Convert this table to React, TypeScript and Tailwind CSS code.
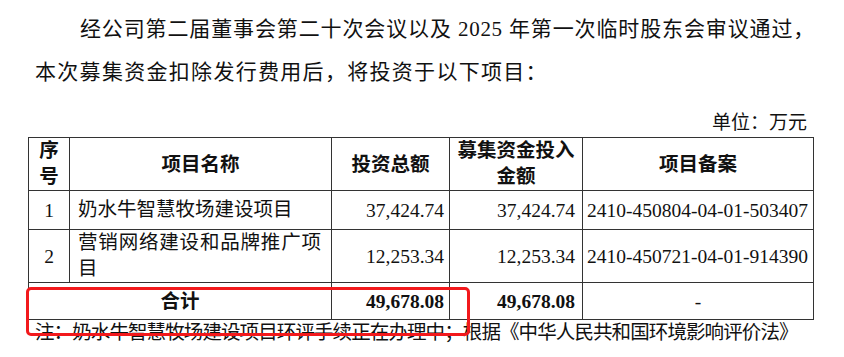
import React from 'react';

const FONT = '[font-family:"Liberation_Serif","Noto_Sans_CJK_SC",serif]';

type TRow = {
  no: string;
  name: string;
  total: string;
  raised: string;
  code: string;
  height: string;
};

const rows: TRow[] = [
  {
    no: '1',
    name: '奶水牛智慧牧场建设项目',
    total: '37,424.74',
    raised: '37,424.74',
    code: '2410-450804-04-01-503407',
    height: 'h-[39px]',
  },
  {
    no: '2',
    name: '营销网络建设和品牌推广项目',
    total: '12,253.34',
    raised: '12,253.34',
    code: '2410-450721-04-01-914390',
    height: 'h-[51px]',
  },
];

const cell = 'border border-[#333] p-0 align-middle';

export default function App() {
  return (
    <div
      className={`relative h-[357px] w-[844px] overflow-hidden bg-white text-[#111] ${FONT}`}
    >
      {/* Body paragraph */}
      <div className="pt-[8px] pl-[35px] pr-[29px] text-[21px] leading-[43px]">
        <div className="indent-[45px] text-justify tracking-[0.7px] whitespace-nowrap [text-align-last:justify]">
          经公司第二届董事会第二十次会议以及 2025 年第一次临时股东会审议通过，
        </div>
        <div className="tracking-[1.3px]">本次募集资金扣除发行费用后，将投资于以下项目：</div>
      </div>

      <div className="mt-[15px] pr-[37px] text-right text-[19px] leading-[28px]">单位：万元</div>

      {/* Table */}
      <table className="ml-[28px] w-[785px] table-fixed border-collapse border-[1.5px] border-[#333] text-[19.5px] leading-[25px]">
        <colgroup>
          <col className="w-[41px]" />
          <col className="w-[262px]" />
          <col className="w-[118px]" />
          <col className="w-[133px]" />
          <col className="w-[231px]" />
        </colgroup>
        <thead>
          <tr className="h-[51px] font-bold">
            <th className={`${cell} px-[4px] text-center leading-[26px]`}>序号</th>
            <th className={`${cell} text-center`}>项目名称</th>
            <th className={`${cell} text-center`}>投资总额</th>
            <th className={`${cell} px-[4px] text-center leading-[26px]`}>募集资金投入金额</th>
            <th className={`${cell} text-center`}>项目备案</th>
          </tr>
        </thead>
        <tbody>
          {rows.map((r) => (
            <tr key={r.no} className={r.height}>
              <td className={`${cell} text-center`}>{r.no}</td>
              <td className={`${cell} pl-[8px] pr-[10px] text-justify leading-[26px]`}>{r.name}</td>
              <td className={`${cell} pr-[5px] text-right`}>{r.total}</td>
              <td className={`${cell} pr-[7px] text-right`}>{r.raised}</td>
              <td className={`${cell} pl-[4px] whitespace-nowrap`}>{r.code}</td>
            </tr>
          ))}
          <tr className="h-[37px] font-bold">
            <td colSpan={2} className={`${cell} text-center`}>
              合计
            </td>
            <td className={`${cell} pr-[5px] text-right`}>49,678.08</td>
            <td className={`${cell} pr-[7px] text-right`}>49,678.08</td>
            <td className={`${cell} text-center font-normal`}>-</td>
          </tr>
        </tbody>
      </table>

      {/* Note */}
      <div className="pl-[35px] text-[19.5px] leading-[25px] tracking-[-0.9px] whitespace-nowrap">
        注：奶水牛智慧牧场建设项目环评手续正在办理中；根据《中华人民共和国环境影响评价法》
      </div>

      {/* Highlight box */}
      <div className="pointer-events-none absolute top-[287px] left-[26px] h-[49px] w-[444px] rounded-[5px] border-[3px] border-[#f2191c]" />
    </div>
  );
}
